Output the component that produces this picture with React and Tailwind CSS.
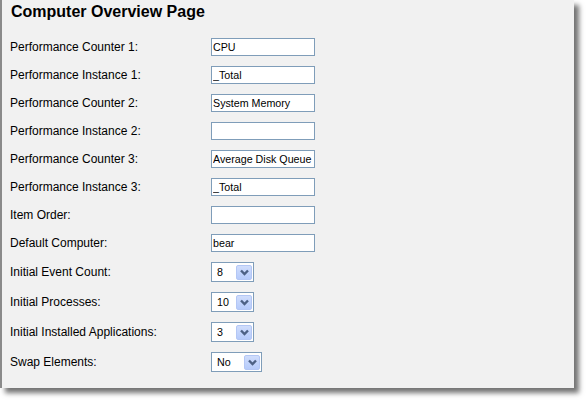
import React from "react";

const inputRows = [
    { label: "Performance Counter 1:", value: "CPU" },
    { label: "Performance Instance 1:", value: "_Total" },
    { label: "Performance Counter 2:", value: "System Memory" },
    { label: "Performance Instance 2:", value: "" },
    { label: "Performance Counter 3:", value: "Average Disk Queue Length" },
    { label: "Performance Instance 3:", value: "_Total" },
    { label: "Item Order:", value: "" },
    { label: "Default Computer:", value: "bear" },
];

const selectRows = [
    { label: "Initial Event Count:", value: "8", width: "w-[43px]" },
    { label: "Initial Processes:", value: "10", width: "w-[43px]" },
    { label: "Initial Installed Applications:", value: "3", width: "w-[43px]" },
    { label: "Swap Elements:", value: "No", width: "w-[51px]" },
];

const FakeSelect = ({ value, width }) => (
    <div className={`${width} h-[20px] flex items-center justify-between border border-[#7f9db9] bg-white pl-[5px] pr-[1px]`}>
        <span className="text-[10.7px] leading-none text-black">{value}</span>
        <span className="w-[16px] h-[15px] flex items-center justify-center rounded-[2px] border border-[#b4c7f5] bg-gradient-to-b from-[#d0ddfc] to-[#b6cbfb]">
            <svg width="9" height="7" viewBox="0 0 9 7">
                <path d="M1 1.5 L4.5 5 L8 1.5" fill="none" stroke="#4d6185" strokeWidth="2.4" />
            </svg>
        </span>
    </div>
);

export default function App() {
    return (
        <div className="w-[586px] h-[400px] bg-white" style={{ fontFamily: '"Liberation Sans", Arial, sans-serif' }}>
            <div className="w-[574px] h-[388px] bg-[#f1f1f1] border-l-2 border-[#8a8a8a] shadow-[5px_5px_5px_rgba(0,0,0,0.55)] pl-[8px]">
                <div className="h-[33px] pt-[3px]">
                    <h1 className="text-[16px] leading-[18px] font-bold text-black pl-[1px]">Computer Overview Page</h1>
                </div>
                {inputRows.map((row, i) => (
                    <div key={i} className="h-[28px] flex items-center">
                        <label className="w-[201px] text-[12px] text-black">{row.label}</label>
                        <input
                            type="text"
                            readOnly
                            defaultValue={row.value}
                            className="w-[104px] h-[18px] border border-[#7f9db9] bg-white px-[1px] text-[10.7px] text-black outline-none"
                        />
                    </div>
                ))}
                {selectRows.map((row, i) => (
                    <div key={i} className="h-[30px] flex items-center">
                        <label className="w-[201px] text-[12px] text-black">{row.label}</label>
                        <FakeSelect value={row.value} width={row.width} />
                    </div>
                ))}
            </div>
        </div>
    );
}
